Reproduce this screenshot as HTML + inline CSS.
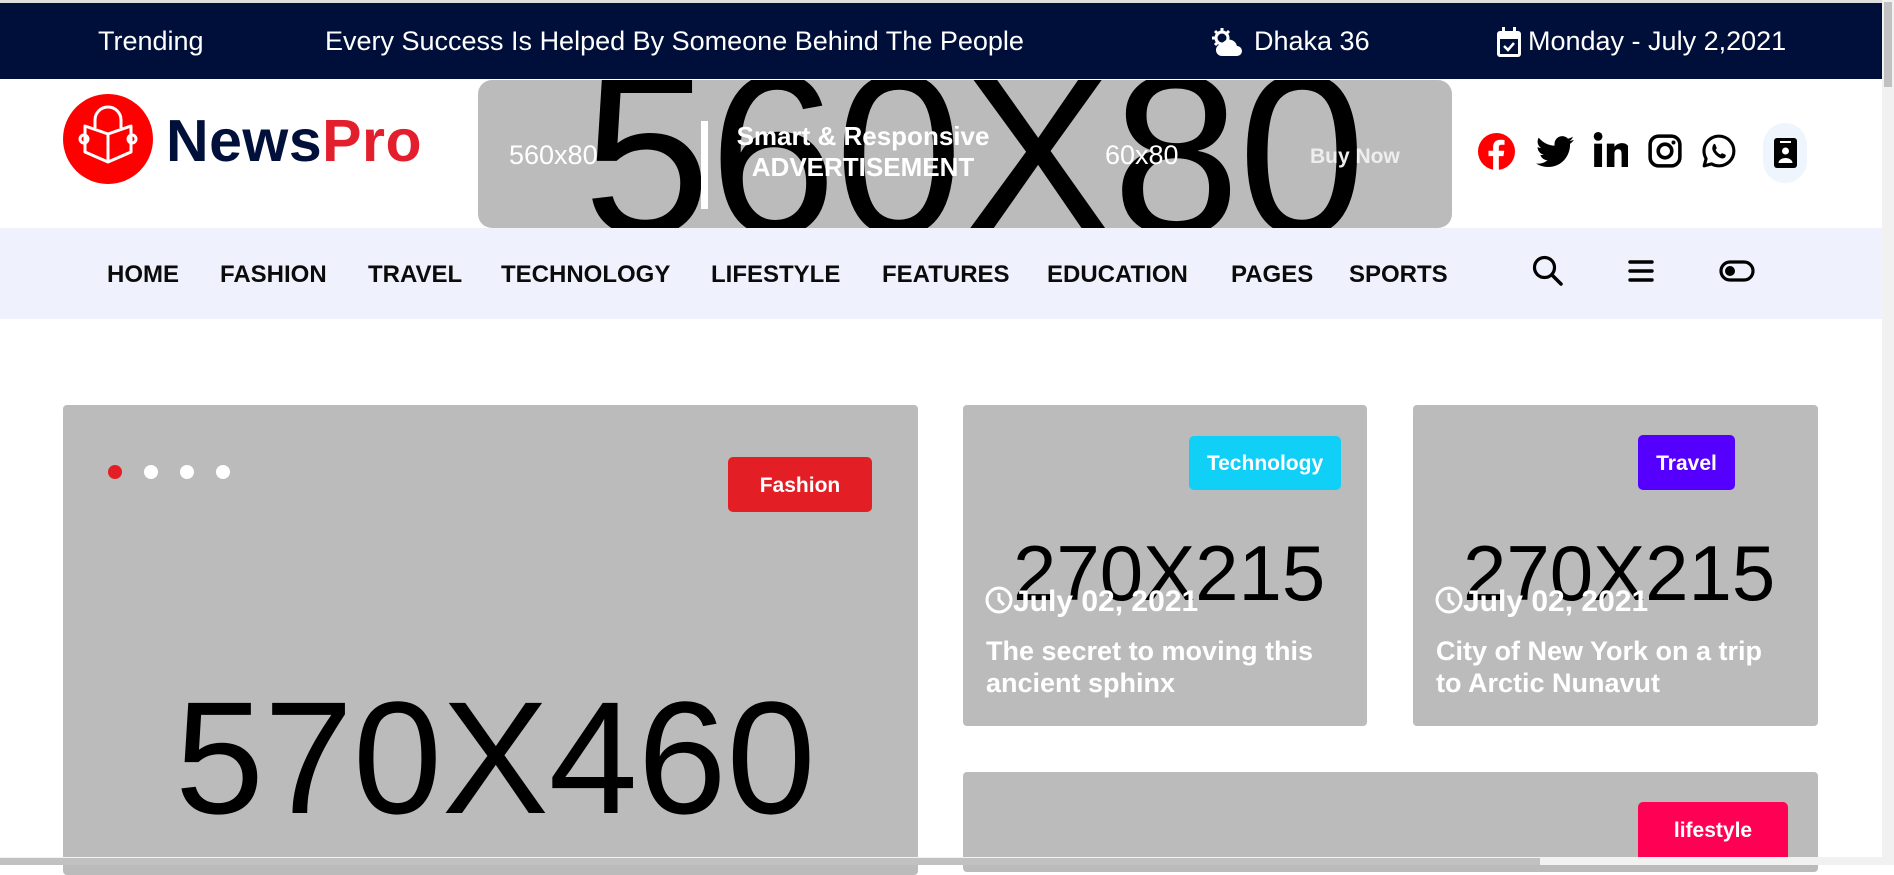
<!DOCTYPE html>
<html><head><meta charset="utf-8"><style>
*{margin:0;padding:0;box-sizing:border-box}
body{width:1894px;height:865px;overflow:hidden;position:relative;background:#fff;font-family:"Liberation Sans",Arial,sans-serif}
.a{position:absolute}
.top{left:0;top:3px;width:1882px;height:76px;background:#000f3a;color:#fff;font-size:27px}
.top span{position:absolute;top:23px;white-space:nowrap}
.hdr{top:79px;left:0;width:1882px;height:149px}
.nav{top:228px;left:0;width:1882px;height:91px;background:#eff2fd}
.nav span{position:absolute;top:33px;font-weight:bold;font-size:24px;color:#0b0b0b}
.card{background:#bbb;border-radius:4px;overflow:hidden}
.badge{position:absolute;color:#fff;font-weight:bold;font-size:21px;border-radius:5px;text-align:center}
.ph{position:absolute;color:#000;white-space:nowrap;line-height:1}
.meta{position:absolute;color:#fff;font-weight:bold;white-space:nowrap}
</style></head><body>
<div class="a" style="left:0;top:0;width:1894px;height:3px;background:#ddd"></div>
<div class="a top">
<span style="left:98px">Trending</span>
<span style="left:325px">Every Success Is Helped By Someone Behind The People</span>
<svg class="a" style="left:1212px;top:25px" width="32" height="30" viewBox="0 0 32 30"><circle cx="10" cy="10" r="6" fill="none" stroke="#fff" stroke-width="3"/><g stroke="#fff" stroke-width="3"><path d="M10 0v3M0 10h3M3 3l2 2M17 3l-2 2M3 17l2-2"/></g><path d="M10 28a6 6 0 0 1 0-12a8 8 0 0 1 15 2a5 5 0 0 1 0 10z" fill="#fff"/></svg>
<span style="left:1254px">Dhaka 36</span>
<svg class="a" style="left:1497px;top:24px" width="24" height="30" viewBox="0 0 24 30"><rect x="5" y="0" width="3" height="6" fill="#fff"/><rect x="16" y="0" width="3" height="6" fill="#fff"/><rect x="0" y="4" width="24" height="26" rx="3" fill="#fff"/><rect x="3" y="12" width="18" height="15" fill="#000f3a"/><path d="M7 19l4 4l6-7" stroke="#fff" stroke-width="2.5" fill="none"/></svg>
<span style="left:1528px">Monday - July 2,2021</span>
</div>

<div class="a hdr">
<svg class="a" style="left:63px;top:15px" width="90" height="90" viewBox="0 0 90 90"><circle cx="45" cy="45" r="45" fill="#f00"/><g fill="none" stroke="#fff" stroke-width="3" stroke-linejoin="round"><path d="M32 34v-8a13 13 0 0 1 26 0v8"/><path d="M22 32l23 8l23-8v26l-23 10l-23-10z"/><path d="M45 40v28"/><circle cx="21" cy="45" r="4"/><circle cx="69" cy="45" r="4"/></g></svg>
<div class="a" style="left:166px;top:28px;font-size:59px;font-weight:bold;letter-spacing:0.5px;white-space:nowrap"><span style="color:#00103a">News</span><span style="color:#e31e2d">Pro</span></div>
<div class="a" style="left:478px;top:1px;width:974px;height:148px;background:#bbb;border-radius:14px;overflow:hidden">
<div class="ph" style="left:105px;top:-40px;font-size:230px;letter-spacing:-2px">560X80</div>
<div class="a" style="left:31px;top:60px;color:#fff;font-size:27px">560x80</div>
<div class="a" style="left:223px;top:41px;width:7px;height:88px;background:#fff"></div>
<div class="a" style="left:250px;top:41px;width:270px;text-align:center;color:#fff;font-size:26px;font-weight:bold;line-height:31px">Smart &amp; Responsive<br>ADVERTISEMENT</div>
<div class="a" style="left:627px;top:60px;color:#fff;font-size:27px">60x80</div>
<div class="a" style="left:832px;top:65px;color:#eee;font-size:21px;font-weight:bold">Buy Now</div>
</div>
<svg class="a" style="left:1478px;top:54px" width="37" height="37" viewBox="0 0 24 24"><circle cx="12" cy="12" r="12" fill="#f00"/><path d="M13.5 24v-9h3l.5-3.5h-3.5V9.3c0-1 .3-1.7 1.8-1.7h1.9V4.5c-.3 0-1.5-.1-2.8-.1c-2.8 0-4.6 1.700-4.6 4.8v2.3H6.8V15h3v9z" fill="#fff"/></svg>
<svg class="a" style="left:1536px;top:57px" width="38" height="32" viewBox="0 0 24 20"><path d="M24 2.3a10 10 0 0 1-2.8.8A5 5 0 0 0 23.3.4a10 10 0 0 1-3.1 1.2A4.9 4.9 0 0 0 11.8 6A14 14 0 0 1 1.7.9a4.9 4.9 0 0 0 1.5 6.6A4.9 4.9 0 0 1 1 6.9a4.9 4.9 0 0 0 3.9 4.8a5 5 0 0 1-2.2.1a4.9 4.9 0 0 0 4.6 3.4A9.9 9.9 0 0 1 0 17.3A14 14 0 0 0 7.5 19.5c9.1 0 14-7.5 14-14v-.6A10 10 0 0 0 24 2.3z" fill="#000"/></svg>
<svg class="a" style="left:1593px;top:53px" width="35" height="35" viewBox="0 0 24 24"><circle cx="3.5" cy="3" r="3" fill="#000"/><rect x="0.8" y="8" width="5.4" height="16" fill="#000"/><path d="M9.5 8h5.2v2.3c.8-1.4 2.6-2.7 5-2.7c4.3 0 5.3 2.8 5.3 6.6V24h-5.4v-8.6c0-2-.3-3.6-2.4-3.6s-2.5 1.6-2.5 3.5V24H9.5z" fill="#000"/></svg>
<svg class="a" style="left:1648px;top:55px" width="34" height="34" viewBox="0 0 24 24"><rect x="1.5" y="1.5" width="21" height="21" rx="6" fill="none" stroke="#000" stroke-width="2.5"/><circle cx="12" cy="12" r="4.8" fill="none" stroke="#000" stroke-width="2.5"/><circle cx="18" cy="6" r="1.4" fill="#000"/></svg>
<svg class="a" style="left:1702px;top:55px" width="34" height="34" viewBox="0 0 24 24"><path d="M12 1.5a10.5 10.5 0 0 1 0 21a10.4 10.4 0 0 1-5.2-1.4L1.5 22.5l1.4-5.1A10.5 10.5 0 0 1 12 1.5z" fill="none" stroke="#000" stroke-width="2.2" stroke-linejoin="round"/><path d="M8.5 7c.5 0 .8 0 1 .6l.9 2.2c.1.4-.5 1-.8 1.3c.7 1.5 2 2.7 3.5 3.4c.3-.3.8-1 1.2-.9l2.2 1c.4.2.4.9 0 1.6c-.6.9-1.800 1.3-3 .9c-2.6-.8-5.3-3.4-6.1-5.900c-.4-1.4.2-3.5 1.1-4.2z" fill="#000"/></svg>
<div class="a" style="left:1763px;top:44px;width:44px;height:60px;border-radius:22px;background:#eef5fd"></div>
<svg class="a" style="left:1774px;top:59px" width="23" height="30" viewBox="0 0 23 30"><rect x="0" y="0" width="23" height="30" rx="3" fill="#000"/><rect x="6" y="3" width="11" height="2" fill="#fff"/><circle cx="11.5" cy="13" r="3.5" fill="#fff"/><path d="M4.5 25a7 5 0 0 1 14 0z" fill="#fff"/></svg>
</div>

<div class="a nav">
<span style="left:107px">HOME</span>
<span style="left:220px">FASHION</span>
<span style="left:368px">TRAVEL</span>
<span style="left:501px">TECHNOLOGY</span>
<span style="left:711px">LIFESTYLE</span>
<span style="left:882px">FEATURES</span>
<span style="left:1047px">EDUCATION</span>
<span style="left:1231px">PAGES</span>
<span style="left:1349px">SPORTS</span>
<svg class="a" style="left:1532px;top:27px" width="31" height="31" viewBox="0 0 31 31"><circle cx="12.5" cy="12.5" r="10" fill="none" stroke="#000" stroke-width="3.2"/><path d="M20 20l9 9" stroke="#000" stroke-width="3.5" stroke-linecap="round"/></svg>
<svg class="a" style="left:1628px;top:32px" width="26" height="22" viewBox="0 0 26 22"><g stroke="#000" stroke-width="3.4" stroke-linecap="round"><path d="M2 2h22M2 11h22M2 20h22"/></g></svg>
<svg class="a" style="left:1719px;top:32px" width="36" height="22" viewBox="0 0 36 22"><rect x="2" y="2" width="32" height="18" rx="9" fill="none" stroke="#000" stroke-width="3.2"/><circle cx="11" cy="11" r="5" fill="#000"/></svg>
</div>

<div class="a card" style="left:63px;top:405px;width:855px;height:470px">
<div class="a" style="left:45px;top:60px;width:14px;height:14px;border-radius:50%;background:#e31e24"></div>
<div class="a" style="left:81px;top:60px;width:14px;height:14px;border-radius:50%;background:#fff"></div>
<div class="a" style="left:117px;top:60px;width:14px;height:14px;border-radius:50%;background:#fff"></div>
<div class="a" style="left:153px;top:60px;width:14px;height:14px;border-radius:50%;background:#fff"></div>
<div class="badge" style="left:665px;top:52px;width:144px;height:55px;line-height:57px;background:#e31e24">Fashion</div>
<div class="ph" style="left:112px;top:273px;font-size:160px">570X460</div>
</div>

<div class="a card" style="left:963px;top:405px;width:404px;height:321px">
<div class="badge" style="left:226px;top:31px;width:152px;height:54px;line-height:56px;background:#11d0f8">Technology</div>
<div class="ph" style="left:50px;top:129px;font-size:78px">270X215</div>
<div class="meta" style="left:22px;top:180px;font-size:30px"><svg width="28" height="28" viewBox="0 0 28 28" style="vertical-align:-3px"><circle cx="14" cy="14" r="12" fill="none" stroke="#fff" stroke-width="3"/><path d="M14 7v7l5 5" stroke="#fff" stroke-width="3" fill="none"/></svg>July 02, 2021</div>
<div class="meta" style="left:23px;top:230px;font-size:27px;line-height:32px">The secret to moving this<br>ancient sphinx</div>
</div>

<div class="a card" style="left:1413px;top:405px;width:405px;height:321px">
<div class="badge" style="left:225px;top:30px;width:97px;height:55px;line-height:57px;background:#5500ff">Travel</div>
<div class="ph" style="left:50px;top:129px;font-size:78px">270X215</div>
<div class="meta" style="left:22px;top:180px;font-size:30px"><svg width="28" height="28" viewBox="0 0 28 28" style="vertical-align:-3px"><circle cx="14" cy="14" r="12" fill="none" stroke="#fff" stroke-width="3"/><path d="M14 7v7l5 5" stroke="#fff" stroke-width="3" fill="none"/></svg>July 02, 2021</div>
<div class="meta" style="left:23px;top:230px;font-size:27px;line-height:32px">City of New York on a trip<br>to Arctic Nunavut</div>
</div>

<div class="a card" style="left:963px;top:772px;width:855px;height:100px">
<div class="badge" style="left:675px;top:30px;width:150px;height:60px;line-height:58px;background:#ff0055">lifestyle</div>
</div>

<div class="a" style="left:1882px;top:0;width:12px;height:865px;background:#f1f1f1"></div>
<div class="a" style="left:1884px;top:2px;width:8px;height:85px;background:#c1c1c1"></div>
<div class="a" style="left:0;top:857px;width:1882px;height:8px;background:#f1f1f1"></div>
<div class="a" style="left:0;top:858px;width:1540px;height:7px;background:#c1c1c1"></div>
</body></html>
